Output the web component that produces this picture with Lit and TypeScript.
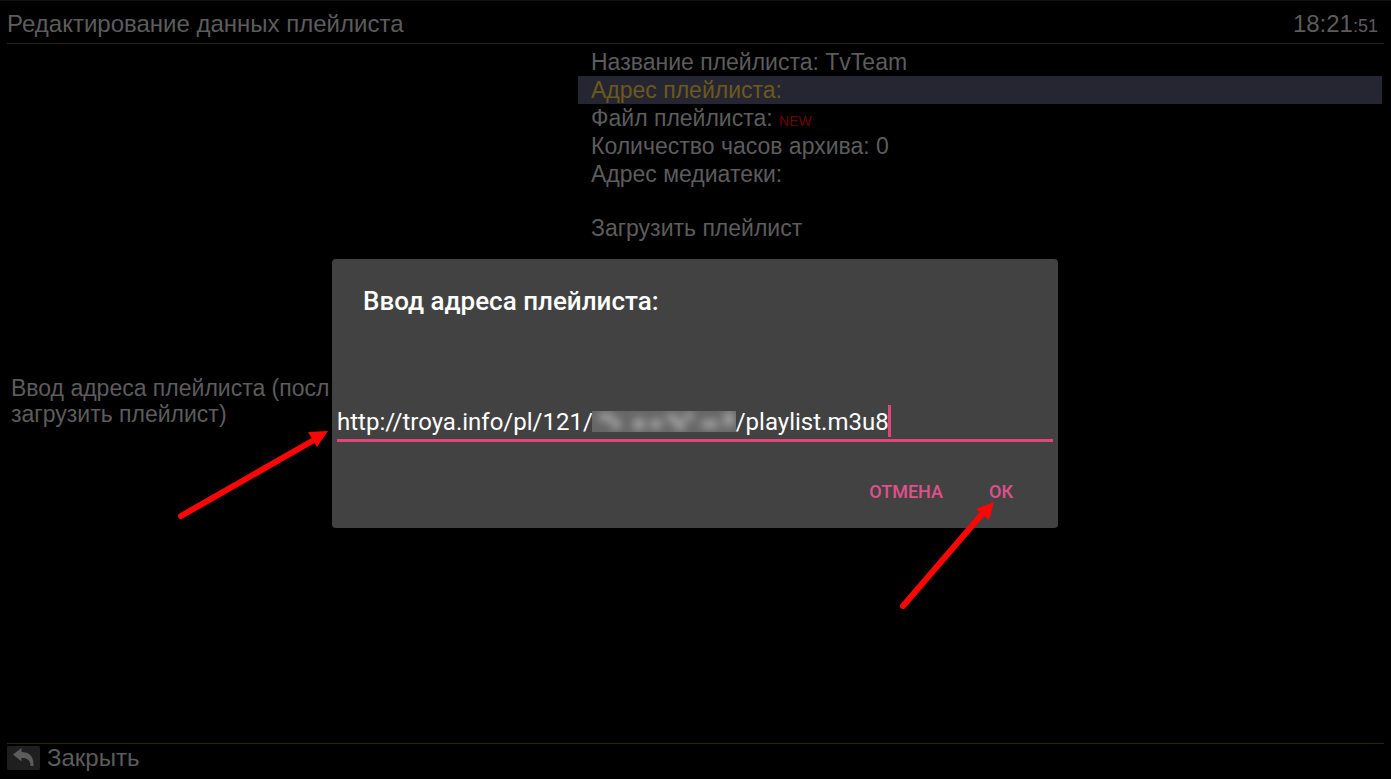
import { LitElement, html, css } from "lit";
import { customElement, state } from "lit/decorators.js";

interface Item {
  label: string;
  value?: string;
  badge?: string;
  gapBefore?: boolean;
}

const ITEMS: Item[] = [
  { label: "Название плейлиста:", value: "TvTeam" },
  { label: "Адрес плейлиста:" },
  { label: "Файл плейлиста:", badge: "NEW" },
  { label: "Количество часов архива:", value: "0" },
  { label: "Адрес медиатеки:" },
  { label: "Загрузить плейлист", gapBefore: true },
];

const HIDDEN_KEY = "\u00a0".repeat(24);

@customElement("address-dialog")
export class AddressDialog extends LitElement {
  @state() private address = `http://troya.info/pl/121/${HIDDEN_KEY}/playlist.m3u8`;

  static styles = css`
    :host {
      display: block;
      box-sizing: border-box;
      padding: 24px 5px 18px;
      border-radius: 4px;
      background: #424242;
      color: #fff;
      font-family: Roboto, sans-serif;
    }
    .title {
      display: block;
      margin: 0 26px 72px;
      font-size: 26px;
      line-height: 36px;
      font-weight: 500;
    }
    .field {
      position: relative;
      border-bottom: 3px solid #e0457b;
    }
    .input {
      display: block;
      width: 100%;
      box-sizing: border-box;
      height: 48px;
      padding: 17px 0 3px;
      border: 0;
      outline: 0;
      background: none;
      color: #fff;
      font: 400 24px/28px Roboto, sans-serif;
    }
    .mask {
      position: absolute;
      left: 255px;
      top: 20px;
      width: 144px;
      height: 21px;
    }
    .caret {
      position: absolute;
      left: 551px;
      top: 14px;
      width: 3px;
      height: 32px;
      background: #e0457b;
    }
    .actions {
      display: flex;
      justify-content: flex-end;
      gap: 14px;
      padding: 32px 24px 0 0;
    }
    .action {
      padding: 0 16px;
      border: 0;
      background: none;
      color: #e0508a;
      font: 500 18px/36px Roboto, sans-serif;
    }
  `;

  private onInput(e: Event) {
    this.address = (e.target as HTMLInputElement).value;
  }

  render() {
    return html`
      <label class="title" for="address">Ввод адреса плейлиста:</label>
      <div class="field">
        <input class="input" id="address" type="text" spellcheck="false" .value=${this.address} @input=${this.onInput} />
        <svg class="mask" viewBox="0 0 144 21" aria-hidden="true">
          <defs>
            <filter id="soft" x="-20%" y="-60%" width="140%" height="220%"><feGaussianBlur stdDeviation="4" /></filter>
            <clipPath id="edge"><rect width="144" height="21" /></clipPath>
          </defs>
          <g clip-path="url(#edge)">
            <rect width="144" height="21" fill="#666" />
            <g filter="url(#soft)" fill="#a8a8a8">
              <ellipse cx="14" cy="6" rx="8" ry="4" />
              <ellipse cx="24" cy="13" rx="5" ry="5" />
              <ellipse cx="47" cy="13" rx="6" ry="6" />
              <ellipse cx="64" cy="13" rx="6" ry="5" />
              <ellipse cx="80" cy="7" rx="6" ry="4" />
              <ellipse cx="88" cy="14" rx="6" ry="5" />
              <ellipse cx="97" cy="5" rx="5" ry="4" />
              <ellipse cx="118" cy="13" rx="10" ry="4" />
              <ellipse cx="137" cy="8" rx="5" ry="8" />
            </g>
          </g>
        </svg>
        <span class="caret"></span>
      </div>
      <div class="actions">
        <button class="action" type="button">ОТМЕНА</button>
        <button class="action" type="button">ОК</button>
      </div>
    `;
  }
}

@customElement("app-root")
export class AppRoot extends LitElement {
  @state() private selected = 1;

  static styles = css`
    :host {
      position: relative;
      display: flex;
      flex-direction: column;
      box-sizing: border-box;
      min-height: 100vh;
      padding: 0 7px;
      border-top: 1px solid #101110;
      background: #000;
      color: #5c5c5c;
      font-family: "Liberation Sans", Arial, sans-serif;
      font-size: 24px;
    }
    .header {
      display: flex;
      justify-content: space-between;
      align-items: baseline;
      padding: 9px 6px 5px 0;
      border-bottom: 1px solid #26230f;
      line-height: 28px;
    }
    .heading {
      margin: 0;
      font-size: 24px;
      font-weight: 400;
    }
    .seconds {
      font-size: 18px;
      line-height: 18px;
    }
    .main {
      flex: 1;
      display: grid;
      grid-template-columns: 571fr 806fr;
    }
    .hint {
      align-self: center;
      margin: 0;
      padding: 14px 4px 0;
      font-size: 23px;
      line-height: 26px;
    }
    .menu {
      margin: 0;
      padding: 4px 2px 0 0;
      list-style: none;
      font-size: 23px;
    }
    .spaced {
      margin-top: 26px;
    }
    .item {
      display: block;
      width: 100%;
      padding: 0 13px;
      border: 0;
      background: none;
      color: inherit;
      font: inherit;
      line-height: 28px;
      text-align: left;
    }
    .current {
      background: #262532;
      color: #6b5a1c;
    }
    .badge {
      color: #6e0000;
      font-size: 14px;
      line-height: 14px;
    }
    .footer {
      border-top: 1px solid #26230f;
      padding: 1px 0 9px;
    }
    .close {
      display: flex;
      align-items: center;
      gap: 7px;
      padding: 0;
      border: 0;
      background: none;
      color: inherit;
      font: inherit;
      line-height: 25px;
    }
    .key {
      display: block;
      width: 33px;
      height: 24px;
    }
    .overlay {
      position: absolute;
      inset: 0;
      display: grid;
      place-items: center;
      padding: 7px 1px 0 0;
    }
    .dialog {
      width: 726px;
      max-width: 100%;
    }
    .arrow {
      position: absolute;
      overflow: visible;
      pointer-events: none;
    }
    .to-field {
      left: 178px;
      top: 428px;
      width: 152px;
      height: 92px;
    }
    .to-ok {
      left: 899px;
      top: 499px;
      width: 98px;
      height: 110px;
    }
  `;

  private renderItem(item: Item, index: number) {
    return html`
      <li class=${item.gapBefore ? "spaced" : ""}>
        <button
          type="button"
          class=${index === this.selected ? "item current" : "item"}
          @click=${() => (this.selected = index)}
        >${item.label}${item.value ? ` ${item.value}` : ""}${item.badge
            ? html` <span class="badge">${item.badge}</span>`
            : ""}</button>
      </li>
    `;
  }

  render() {
    return html`
      <header class="header">
        <h1 class="heading">Редактирование данных плейлиста</h1>
        <time>18:21<span class="seconds">:51</span></time>
      </header>
      <main class="main">
        <p class="hint">Ввод адреса плейлиста (посл<br />загрузить плейлист)</p>
        <ul class="menu">${ITEMS.map((item, i) => this.renderItem(item, i))}</ul>
      </main>
      <footer class="footer">
        <button class="close" type="button">
          <svg class="key" viewBox="0 0 33 24" aria-hidden="true">
            <rect width="33" height="24" rx="2" fill="#1f1f1f" />
            <path d="M6 8.500L14.500 2V6C22 6 27 10 26.500 20H23.500C23.500 14.500 20.500 12 14.500 12V15.500Z" fill="#5c5c5c" />
          </svg>
          <span>Закрыть</span>
        </button>
      </footer>
      <div class="overlay">
        <address-dialog class="dialog" role="dialog"></address-dialog>
      </div>
      <svg class="arrow to-field" viewBox="0 0 152 92" aria-hidden="true">
        <path d="M3 87L136 11" stroke="#fb0505" stroke-width="6" stroke-linecap="round" />
        <path d="M150 2L130 3L139 18Z" fill="#fb0505" />
      </svg>
      <svg class="arrow to-ok" viewBox="0 0 98 110" aria-hidden="true">
        <path d="M4 106L84 13" stroke="#fb0505" stroke-width="6" stroke-linecap="round" />
        <path d="M95 2L77 9L90 20Z" fill="#fb0505" />
      </svg>
    `;
  }
}
